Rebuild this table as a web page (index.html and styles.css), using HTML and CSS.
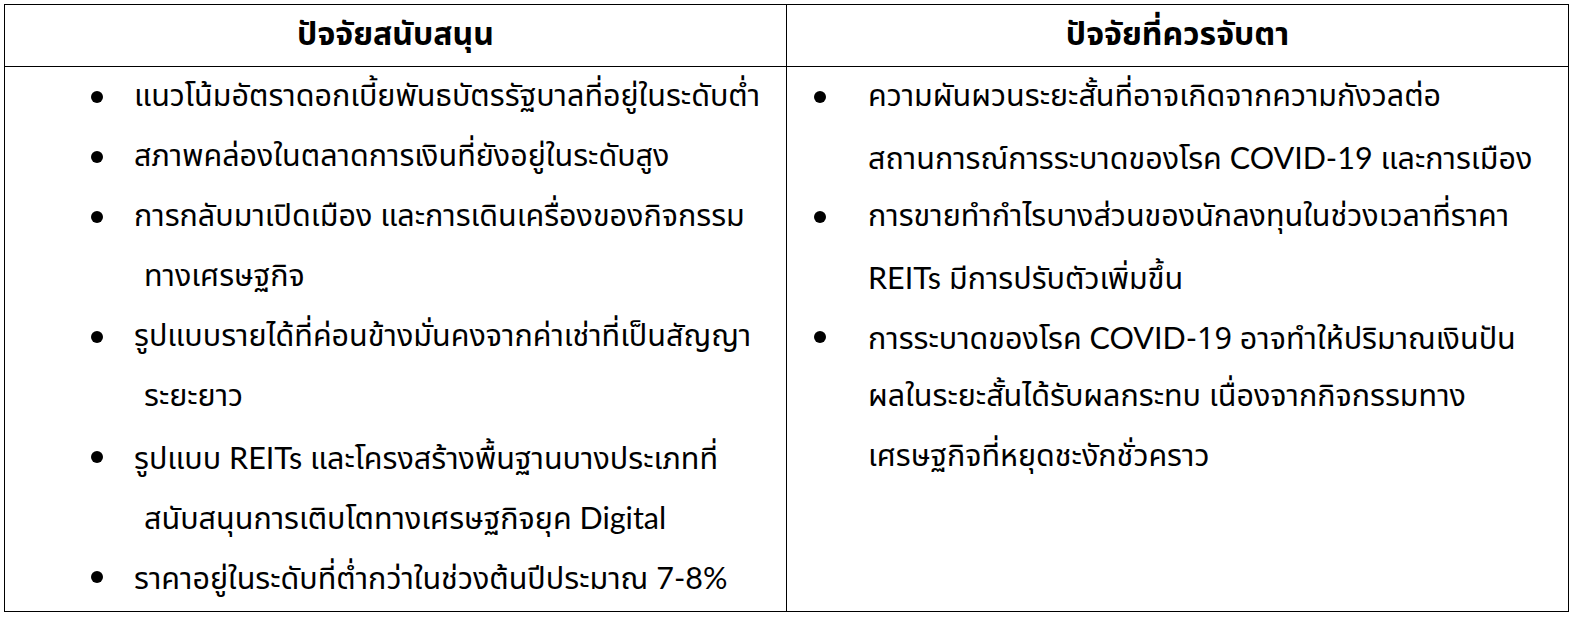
FILE: index.html
```html
<!DOCTYPE html>
<html lang="th">
<head>
<meta charset="utf-8">
<link rel="stylesheet" href="styles.css">
</head>
<body>
<table class="factors">
  <colgroup><col class="col-left"><col class="col-right"></colgroup>
  <thead>
    <tr>
      <th>ปัจจัยสนับสนุน</th>
      <th>ปัจจัยที่ควรจับตา</th>
    </tr>
  </thead>
  <tbody>
    <tr>
      <td class="cell-left">
        <ul class="items">
          <li><span class="line">แนวโน้มอัตราดอกเบี้ยพันธบัตรรัฐบาลที่อยู่ในระดับต่ำ</span></li>
          <li><span class="line">สภาพคล่องในตลาดการเงินที่ยังอยู่ในระดับสูง</span></li>
          <li><span class="line">การกลับมาเปิดเมือง และการเดินเครื่องของกิจกรรม</span><span class="line cont">ทางเศรษฐกิจ</span></li>
          <li><span class="line">รูปแบบรายได้ที่ค่อนข้างมั่นคงจากค่าเช่าที่เป็นสัญญา</span><span class="line cont">ระยะยาว</span></li>
          <li><span class="line">รูปแบบ <span class="lat">REITs</span> และโครงสร้างพื้นฐานบางประเภทที่</span><span class="line cont">สนับสนุนการเติบโตทางเศรษฐกิจยุค <span class="lat">Digital</span></span></li>
          <li><span class="line">ราคาอยู่ในระดับที่ต่ำกว่าในช่วงต้นปีประมาณ <span class="lat">7-8%</span></span></li>
        </ul>
      </td>
      <td class="cell-right">
        <ul class="items">
          <li><span class="line">ความผันผวนระยะสั้นที่อาจเกิดจากความกังวลต่อ</span><span class="line">สถานการณ์การระบาดของโรค <span class="lat">COVID-19</span> และการเมือง</span></li>
          <li><span class="line">การขายทำกำไรบางส่วนของนักลงทุนในช่วงเวลาที่ราคา</span><span class="line"><span class="lat">REITs</span> มีการปรับตัวเพิ่มขึ้น</span></li>
          <li><span class="line">การระบาดของโรค <span class="lat">COVID-</span>19 อาจทำให้ปริมาณเงินปัน</span><span class="line">ผลในระยะสั้นได้รับผลกระทบ เนื่องจากกิจกรรมทาง</span><span class="line">เศรษฐกิจที่หยุดชะงักชั่วคราว</span></li>
        </ul>
      </td>
    </tr>
  </tbody>
</table>
</body>
</html>
```

FILE: styles.css
```css
html, body {
  margin: 0;
  padding: 0;
  background: #ffffff;
}
body {
  padding: 4px 0 0 4px;
  font-family: "Noto Sans Thai", "Noto Sans", "Liberation Sans", sans-serif;
  color: #000000;
}
.factors {
  border-collapse: collapse;
  width: 1565px;
  table-layout: fixed;
}
.col-left { width: 782px; }
.factors th,
.factors td {
  border: 1px solid #000000;
  padding: 0;
}
.factors th {
  height: 61px;
  font-size: 32px;
  font-weight: 700;
  text-align: center;
  vertical-align: middle;
  line-height: 1.2;
}
.factors td {
  height: 544px;
  vertical-align: top;
  font-size: 30.5px;
}
.items {
  list-style: none;
  margin: 0;
  padding: 0;
}
.items li {
  position: relative;
}
.items li::before {
  content: "";
  position: absolute;
  top: 24px;
  width: 12px;
  height: 12px;
  border-radius: 50%;
  background: #000000;
}
.line {
  display: block;
  height: 60px;
  line-height: 60px;
  white-space: nowrap;
}
.cell-left .items li { padding-left: 129px; }
.cell-left .items li::before { left: 86px; }
.cell-left .line.cont { padding-left: 10px; }
.cell-right .items li { padding-left: 81px; }
.cell-right .items li::before { left: 27px; }
.lat {
  font-family: "Lato", "Open Sans", sans-serif;
}
```
